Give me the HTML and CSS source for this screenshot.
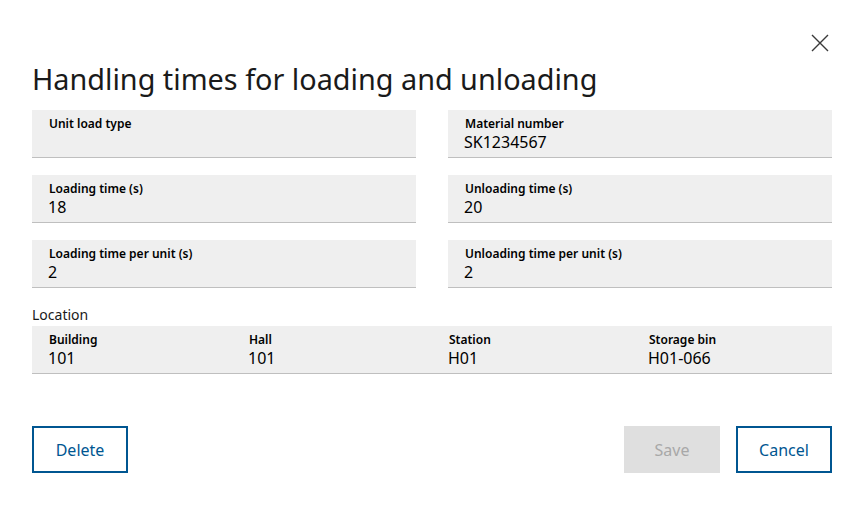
FILE: index.html
```html
<!DOCTYPE html>
<html lang="en">
<head>
    <meta charset="UTF-8">
    <meta name="viewport" content="width=device-width, initial-scale=1.0">
    <title>Handling times</title>
    <link rel="stylesheet" href="styles.css">
</head>
<body>

    <!-- Dialog -->
    <div class="dialog">
        <div class="dialog-top">
            <button class="close-btn" aria-label="Close">
                <svg width="18" height="18" viewBox="0 0 18 18">
                    <path d="M1 1 L17 17 M17 1 L1 17" stroke="#3a3a3a" stroke-width="1.4" fill="none"/>
                </svg>
            </button>
        </div>

        <h1 class="title">Handling times for loading and unloading</h1>

        <!-- Felder -->
        <div class="field-grid">
            <div class="field">
                <div class="field-label">Unit load type</div>
                <div class="field-value"></div>
            </div>
            <div class="field">
                <div class="field-label">Material number</div>
                <div class="field-value">SK1234567</div>
            </div>
            <div class="field">
                <div class="field-label">Loading time (s)</div>
                <div class="field-value">18</div>
            </div>
            <div class="field">
                <div class="field-label">Unloading time (s)</div>
                <div class="field-value">20</div>
            </div>
            <div class="field">
                <div class="field-label">Loading time per unit (s)</div>
                <div class="field-value">2</div>
            </div>
            <div class="field">
                <div class="field-label">Unloading time per unit (s)</div>
                <div class="field-value">2</div>
            </div>
        </div>

        <!-- Lagerort -->
        <div class="section-label">Location</div>
        <div class="location">
            <div class="location-item">
                <div class="field-label">Building</div>
                <div class="field-value">101</div>
            </div>
            <div class="location-item">
                <div class="field-label">Hall</div>
                <div class="field-value">101</div>
            </div>
            <div class="location-item">
                <div class="field-label">Station</div>
                <div class="field-value">H01</div>
            </div>
            <div class="location-item">
                <div class="field-label">Storage bin</div>
                <div class="field-value">H01-066</div>
            </div>
        </div>

        <!-- Buttons -->
        <div class="actions">
            <button class="btn btn-secondary">Delete</button>
            <div class="actions-right">
                <button class="btn btn-disabled" disabled>Save</button>
                <button class="btn btn-secondary">Cancel</button>
            </div>
        </div>
    </div>

</body>
</html>
```

FILE: styles.css
```css
body {
    font-family: 'Noto Sans', 'Open Sans', sans-serif;
    background-color: #ffffff;
    color: #000000;
    margin: 0;
    padding: 0;
}
.dialog {
    padding: 34px 32px 0 32px;
}
.dialog-top {
    display: flex;
    justify-content: flex-end;
    height: 20px;
}
.close-btn {
    background: none;
    border: none;
    padding: 0;
    margin-right: 3px;
    width: 18px;
    height: 18px;
    cursor: pointer;
}
.title {
    font-size: 28.8px;
    font-weight: 400;
    margin: 5px 0 0 0;
    line-height: 40px;
    color: #1a1a1a;
}
.field-grid {
    display: grid;
    grid-template-columns: 384px 384px;
    column-gap: 32px;
    row-gap: 17px;
    margin-top: 11px;
}
.field {
    background-color: #efefef;
    border-bottom: 1px solid #bfbfbf;
    padding: 6px 16px 0 16px;
    box-sizing: border-box;
    height: 48px;
}
.field-label {
    font-size: 12px;
    font-weight: 600;
    line-height: 16px;
    padding-left: 1px;
}
.field-value {
    font-size: 16px;
    line-height: 21px;
}
.section-label {
    font-size: 14px;
    line-height: 20px;
    margin-top: 17px;
    color: #1a1a1a;
}
.location {
    display: grid;
    grid-template-columns: repeat(4, 200px);
    background-color: #efefef;
    border-bottom: 1px solid #bfbfbf;
    height: 48px;
    box-sizing: border-box;
    padding-top: 6px;
    margin-top: 1px;
}
.location-item {
    padding-left: 16px;
}
.actions {
    display: flex;
    justify-content: space-between;
    margin-top: 52px;
}
.actions-right {
    display: flex;
    gap: 16px;
}
.btn {
    font-family: 'Noto Sans', 'Open Sans', sans-serif;
    font-size: 16px;
    width: 96px;
    height: 47px;
    box-sizing: border-box;
    cursor: pointer;
}
.btn-secondary {
    background-color: #ffffff;
    border: 2px solid #005691;
    color: #005691;
}
.btn-disabled {
    background-color: #dfdfdf;
    border: none;
    color: #a8a8a8;
    cursor: default;
}
```
